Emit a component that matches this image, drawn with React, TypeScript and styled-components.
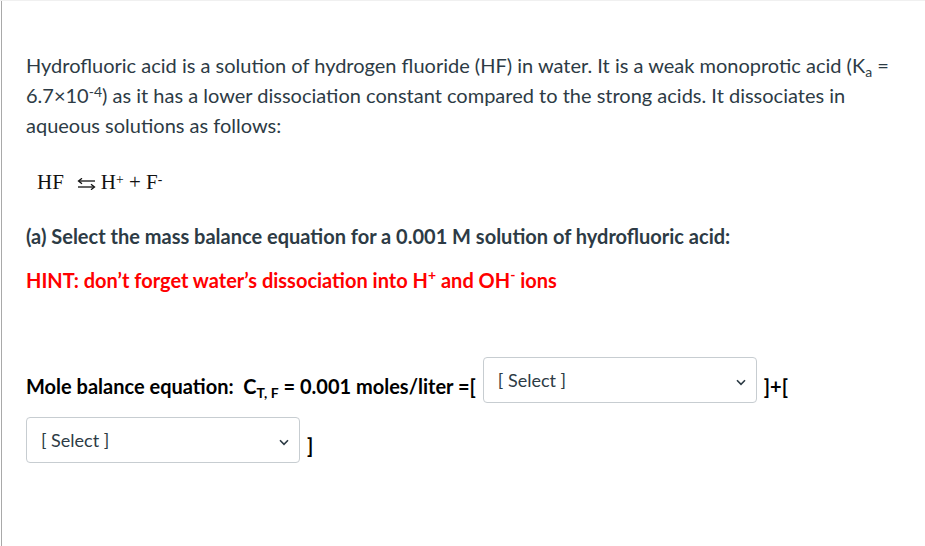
import React from "react";
import styled, { createGlobalStyle } from "styled-components";

const Global = createGlobalStyle`
  html, body { margin: 0; padding: 0; background: #fff; }
  body { font-family: Lato, "Noto Sans", sans-serif; }
`;

const Page = styled.div`
  border-top: 1px solid #f0f0f0;
  height: 545px;
  overflow: hidden;
`;

const Panel = styled.div`
  margin-left: 1px;
  border-left: 1px solid #a9a9a9;
  height: 100%;
  box-sizing: border-box;
  padding: 49px 26px 0 24px;
  color: #2d3b45;
  font-size: 20px;
  line-height: 30px;
`;

const Para = styled.p<{ $mt?: number; $bold?: boolean; $color?: string }>`
  margin: ${(p) => p.$mt ?? 0}px 0 0;
  font-weight: ${(p) => (p.$bold ? 700 : 400)};
  color: ${(p) => p.$color ?? "inherit"};
`;

const Sub = styled.sub`
  font-size: 0.7em;
  line-height: 0;
  vertical-align: -0.25em;
`;

const Sup = styled.sup<{ $lift?: number }>`
  font-size: 0.7em;
  line-height: 0;
  vertical-align: ${(p) => p.$lift ?? 0.45}em;
`;

const Equation = styled.p`
  margin: 27px 0 0;
  padding-left: 11px;
  font-family: "Liberation Serif", "Times New Roman", serif;
  font-size: 21px;
  line-height: 30px;
  color: #111;
`;

const EqSup = styled.sup`
  font-size: 0.65em;
  line-height: 0;
  vertical-align: 0.4em;
`;

const Arrow = styled.svg`
  display: inline-block;
  width: 19px;
  height: 12px;
  margin: 0 5px 0 13px;
  vertical-align: -1px;
`;

const Row = styled.div`
  margin-top: 62px;
  display: flex;
  flex-wrap: wrap;
  align-items: flex-start;
  column-gap: 7px;
  row-gap: 14px;
`;

const Label = styled.span<{ $mt: number }>`
  margin-top: ${(p) => p.$mt}px;
  font-weight: 700;
  color: #000;
  white-space: nowrap;
`;

const Dropdown = styled.div`
  box-sizing: border-box;
  width: 274px;
  height: 46px;
  border: 1px solid #c7cdd1;
  border-radius: 4px;
  background: #fff;
  padding: 0 10px 0 14px;
  display: flex;
  align-items: center;
  justify-content: space-between;
  font-size: 18px;
  color: #2d3b45;
`;

const Chevron = styled.svg`
  width: 10px;
  height: 7px;
  margin-top: 4px;
`;

function Select() {
  return (
    <Dropdown>
      <span>[ Select ]</span>
      <Chevron viewBox="0 0 10 7">
        <polyline points="1,1.2 5,5.4 9,1.2" fill="none" stroke="#2d3b45" strokeWidth="1.6" />
      </Chevron>
    </Dropdown>
  );
}

export default function App() {
  return (
    <>
      <Global />
      <Page>
        <Panel>
          <Para>
            Hydrofluoric acid is a solution of hydrogen fluoride (HF) in water. It is a weak monoprotic acid (K
            <Sub>a</Sub> = 6.7×10<Sup>-4</Sup>) as it has a lower dissociation constant compared to the strong acids. It
            dissociates in aqueous solutions as follows:
          </Para>
          <Equation>
            HF
            <Arrow viewBox="0 0 19 12">
              <line x1="2" y1="3" x2="18" y2="3" stroke="#111" strokeWidth="1.3" />
              <polyline points="5,0.3 1.5,3 5,5.7" fill="none" stroke="#111" strokeWidth="1.3" />
              <line x1="1" y1="9" x2="17" y2="9" stroke="#111" strokeWidth="1.3" />
              <polyline points="14,6.3 17.5,9 14,11.7" fill="none" stroke="#111" strokeWidth="1.3" />
            </Arrow>
            H<EqSup>+</EqSup> + F<EqSup>-</EqSup>
          </Equation>
          <Para $mt={24} $bold>
            (a) Select the mass balance equation for a 0.001 M solution of hydrofluoric acid:
          </Para>
          <Para $mt={14} $bold $color="#ff0000">
            HINT: don’t forget water’s dissociation into H<Sup $lift={0.6}>+</Sup> and OH<Sup $lift={0.6}>-</Sup> ions
          </Para>
          <Row>
            <Label $mt={14}>
              Mole balance equation:&nbsp; C<Sub>T, F</Sub> = 0.001 moles/liter =[
            </Label>
            <Select />
            <Label $mt={14}>]+[</Label>
            <Select />
            <Label $mt={13}>]</Label>
          </Row>
        </Panel>
      </Page>
    </>
  );
}
